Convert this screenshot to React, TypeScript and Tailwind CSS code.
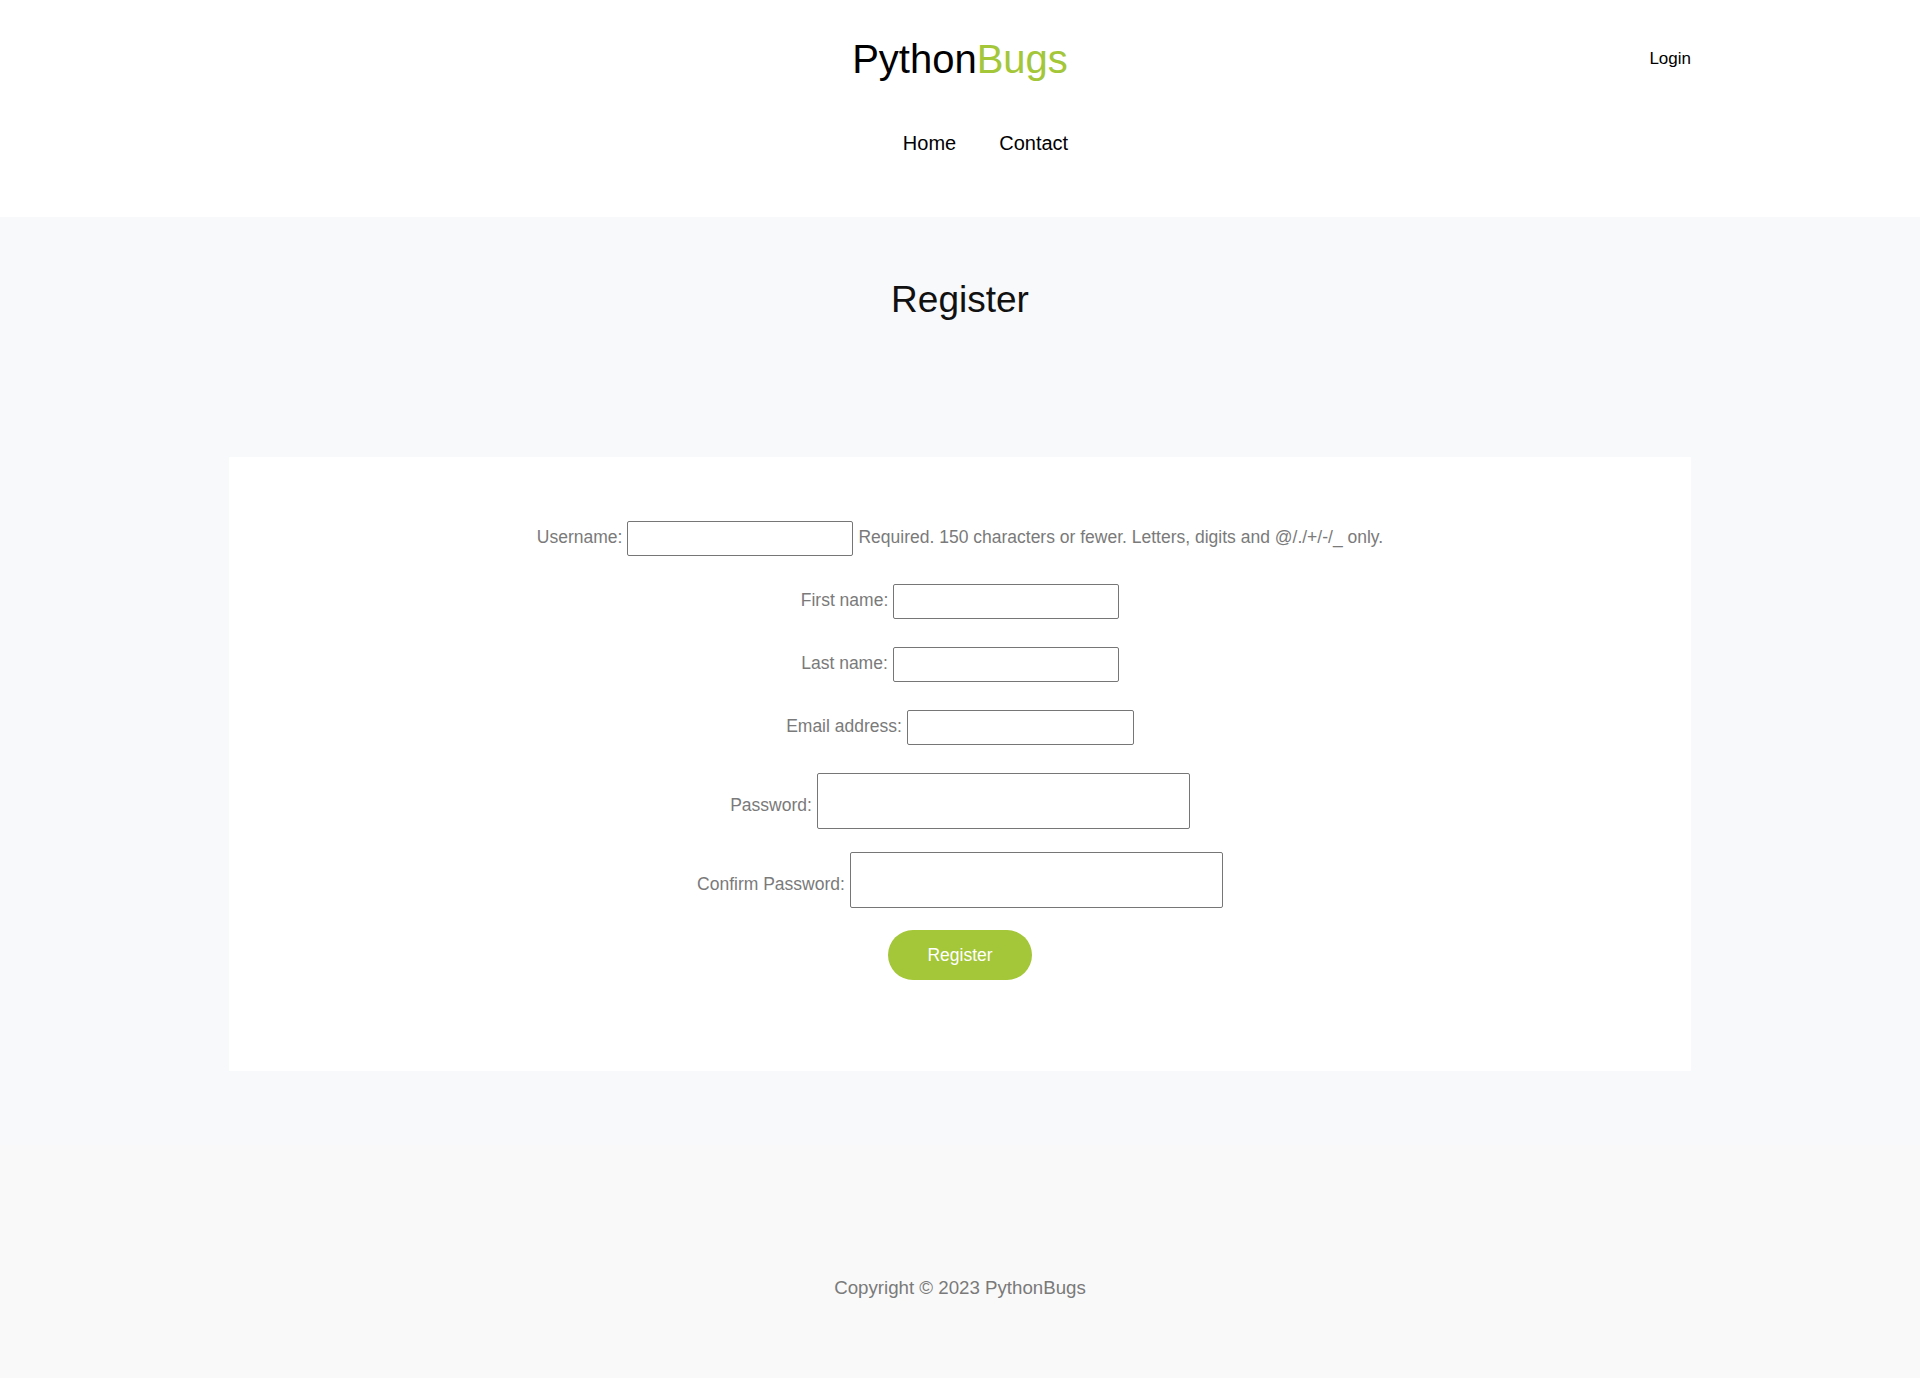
type Field = { label: string; type: string; big?: boolean; help?: string; width: string; space: string }

const FIELDS: Field[] = [
  {
    label: 'Username:',
    type: 'text',
    width: 'w-[226px]',
    space: '',
    help: 'Required. 150 characters or fewer. Letters, digits and @/./+/-/_ only.',
  },
  { label: 'First name:', type: 'text', width: 'w-[226px]', space: 'mt-[28px]' },
  { label: 'Last name:', type: 'text', width: 'w-[226px]', space: 'mt-[28px]' },
  { label: 'Email address:', type: 'email', width: 'w-[227px]', space: 'mt-[28px]' },
  { label: 'Password:', type: 'password', width: 'w-[373px]', space: 'mt-[28px]', big: true },
  { label: 'Confirm Password:', type: 'password', width: 'w-[373px]', space: 'mt-[23px]', big: true },
]

function FormRow({ field }: { field: Field }) {
  return (
    <div className={`flex justify-center gap-[5px] ${field.big ? 'items-end' : 'items-center'} ${field.space}`}>
      <label className={`text-[17.5px] text-[#7a7a7a] leading-[20px] ${field.big ? 'mb-[14px]' : 'mb-[4px]'}`}>
        {field.label}
      </label>
      <input
        type={field.type}
        className={`${field.width} ${field.big ? 'h-[56px]' : 'h-[35px]'} bg-white border border-[#767676] rounded-[2px] px-2 text-[17px] outline-none`}
      />
      {field.help && <span className="text-[17.5px] text-[#7a7a7a] leading-[20px] mb-[4px]">{field.help}</span>}
    </div>
  )
}

export default function App() {
  return (
    <div className="min-h-screen bg-[#f9f9f9] font-['Liberation_Sans',Arial,sans-serif] text-[#111]">
      {/* Header */}
      <header className="bg-white h-[217px] pt-[36px]">
        <div className="w-[1462px] mx-auto grid grid-cols-[1fr_auto_1fr] items-start">
          <div />
          <a href="#" className="text-[40px] leading-[46px] text-black">
            Python<span className="text-[#a4c639]">Bugs</span>
          </a>
          <div className="flex justify-end pt-[13px]">
            <a href="#" className="text-[17px] leading-[20px] text-black">
              Login
            </a>
          </div>
        </div>
        <nav className="flex justify-center gap-[43px] pl-[51px] mt-[50px]">
          <a href="#" className="text-[20px] leading-[23px] text-black">
            Home
          </a>
          <a href="#" className="text-[20px] leading-[23px] text-black">
            Contact
          </a>
        </nav>
      </header>

      {/* Main */}
      <main className="bg-[#f8f9fb] pt-[62px] pb-[74px]">
        <h1 className="text-center text-[37px] leading-[42px] text-[#111]">Register</h1>
        <div className="w-[1462px] mx-auto mt-[136px] bg-white pt-[64px] pb-[91px]">
          <form onSubmit={(e) => e.preventDefault()}>
            {FIELDS.map((f) => (
              <FormRow key={f.label} field={f} />
            ))}
            <div className="flex justify-center mt-[22px]">
              <button
                type="submit"
                className="bg-[#a4c639] w-[144px] h-[50px] rounded-full text-white text-[17.5px]"
              >
                Register
              </button>
            </div>
          </form>
        </div>
      </main>

      {/* Footer */}
      <footer className="h-[233px] pt-[132px] text-center">
        <p className="text-[18.7px] leading-[21px] text-[#7a7a7a]">Copyright © 2023 PythonBugs</p>
      </footer>
    </div>
  )
}
